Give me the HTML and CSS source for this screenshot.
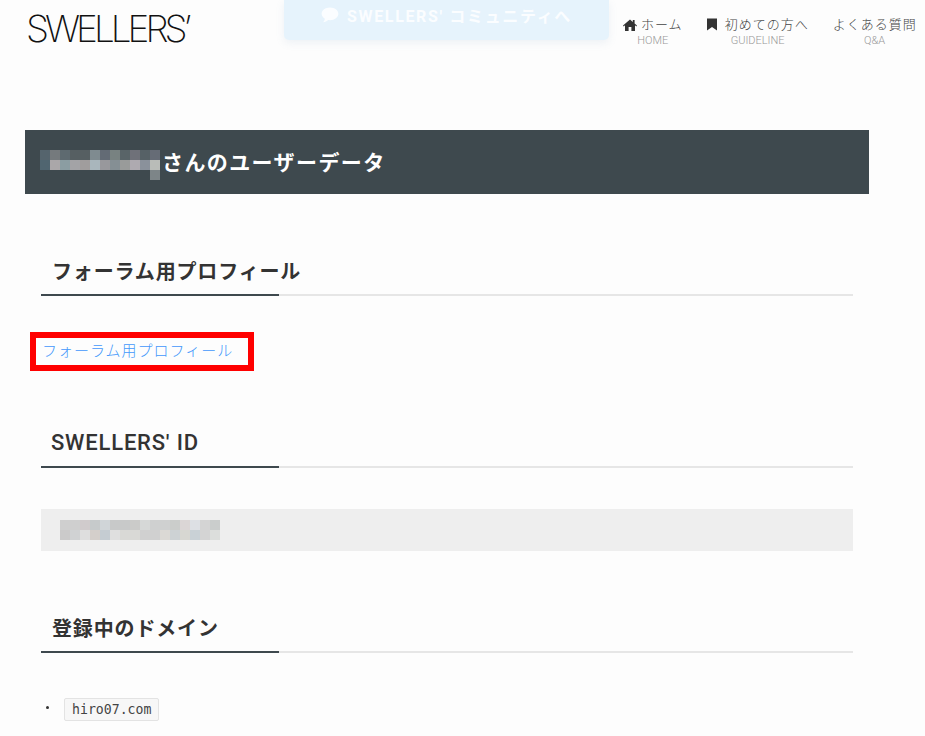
FILE: index.html
```html
<!DOCTYPE html>
<html lang="ja">
<head>
  <meta charset="UTF-8" />
  <title>SWELLERS' ユーザーデータ</title>
  <meta name="viewport" content="width=device-width, initial-scale=1.0" />
  <link rel="stylesheet" href="styles.css">
</head>
<body>
  <header class="site-header">
    <a class="logo" href="#">SWELLERS’</a>
    <a class="community" href="#">
      <svg class="community-icon" viewBox="0 0 20 18" aria-hidden="true"><path d="M10 0.5C4.8 0.5 0.6 3.6 0.6 7.6c0 2.3 1.4 4.3 3.6 5.6-.2 1.5-1 2.9-2 3.9 2.3-.2 4.4-1.2 5.8-2.5.6.1 1.3.2 2 .2 5.2 0 9.4-3.2 9.4-7.2S15.2.5 10 .5z"/></svg>
      SWELLERS' コミュニティへ
    </a>
    <nav class="nav">
      <a class="nav-item" href="#">
        <span class="nav-label"><svg class="nav-icon" viewBox="0 0 14 12" aria-hidden="true"><path d="M7 0.5 0 6.6l.7.8L2 6.3V12h3.6V8h2.8v4H12V6.3l1.3 1.1.7-.8-2.4-2.1V1h-1.8v2L7 .5z"/></svg>ホーム</span>
        <span class="nav-sub">HOME</span>
      </a>
      <a class="nav-item" href="#">
        <span class="nav-label"><svg class="nav-icon nav-icon-mark" viewBox="0 0 10 12" aria-hidden="true"><path d="M0 0h10v12L5 8.6 0 12z"/></svg>初めての方へ</span>
        <span class="nav-sub">GUIDELINE</span>
      </a>
      <a class="nav-item" href="#">
        <span class="nav-label">よくある質問</span>
        <span class="nav-sub">Q&amp;A</span>
      </a>
    </nav>
  </header>

  <main class="content">
    <h1 class="page-title"><span class="blur-name"></span>さんのユーザーデータ</h1>

    <section class="section">
      <h2 class="section-title">フォーラム用プロフィール</h2>
      <p class="profile-link"><a href="#">フォーラム用プロフィール</a><span class="highlight"></span></p>
    </section>

    <section class="section section-id">
      <h2 class="section-title title-latin">SWELLERS' ID</h2>
      <div class="id-box"><span class="blur-id"></span></div>
    </section>

    <section class="section section-domain">
      <h2 class="section-title">登録中のドメイン</h2>
      <ul class="domains">
        <li><code>hiro07.com</code></li>
      </ul>
    </section>
  </main>
</body>
</html>
```

FILE: styles.css
```css
* {
  box-sizing: border-box;
}

html, body {
  height: 736px;
  overflow: hidden;
}

body {
  margin: 0;
  background: #fdfdfd;
  color: #333;
  font-family: Roboto, "Noto Sans CJK JP", sans-serif;
}

a {
  text-decoration: none;
}

.site-header {
  display: flex;
  align-items: flex-start;
  height: 130px;
  padding-left: 26px;
}

.logo {
  width: 258px;
  margin-top: 6px;
  color: #111;
  font-family: Inter, sans-serif;
  font-size: 37px;
  font-weight: 200;
  line-height: 46px;
  letter-spacing: -4px;
  white-space: nowrap;
}

.community {
  display: flex;
  align-items: center;
  justify-content: center;
  gap: 8px;
  width: 325px;
  height: 40px;
  padding-bottom: 11px;
  background: #e6f3fc;
  border-radius: 0 0 5px 5px;
  box-shadow: 0 3px 8px rgba(120, 160, 190, 0.12);
  color: #fbfdff;
  font-size: 16px;
  font-weight: 700;
  letter-spacing: 1.65px;
}

.community-icon {
  width: 18px;
  height: 16px;
  fill: #fbfdff;
}

.nav {
  display: flex;
  gap: 24px;
  margin-left: 14px;
  padding-top: 16px;
}

.nav-item {
  display: flex;
  flex-direction: column;
  align-items: center;
  color: #444;
}

.nav-label {
  display: flex;
  align-items: center;
  font-size: 13px;
  font-weight: 300;
  line-height: 17px;
  letter-spacing: 1px;
  white-space: nowrap;
}

.nav-icon {
  width: 14px;
  height: 12px;
  margin-right: 4px;
  fill: #333;
}

.nav-icon-mark {
  width: 10px;
  height: 13px;
  margin-right: 8px;
}

.nav-sub {
  margin-top: 1px;
  color: #999;
  font-size: 11px;
  font-weight: 300;
  line-height: 14px;
}

.content {
  width: 844px;
  margin-left: 25px;
}

.page-title {
  display: flex;
  align-items: center;
  height: 64px;
  margin: 0;
  padding: 0 0 2px 15px;
  background: #3e494e;
  color: #fff;
  font-size: 21px;
  font-weight: 700;
  letter-spacing: 1.4px;
}

.blur-name {
  position: relative;
  width: 120px;
  height: 20px;
  margin-right: 2px;
  margin-top: -2px;
  background:
    linear-gradient(90deg, #55646d 0 10px, #757a7d 10px 20px, #5e6a70 20px 30px, #565f62 30px 50px, #7f8b90 50px 60px, #636b75 60px 70px, #788281 70px 80px, #596468 80px 90px, #6f7179 90px 100px, #566166 100px 110px, #666c76 110px 120px) 0 0 / 120px 10px no-repeat,
    linear-gradient(90deg, #506570 0 10px, #aaa7a9 10px 20px, #8b9da2 20px 30px, #a3a3a6 30px 40px, #a09d9d 40px 50px, #a9b6bc 50px 60px, #98989c 60px 70px, #858f94 70px 80px, #999b9a 80px 90px, #aeaab0 90px 100px, #8a919b 100px 110px, #b9bcb8 110px 120px) 0 10px / 120px 10px no-repeat;
}

.blur-name::after {
  content: "";
  position: absolute;
  top: 20px;
  left: 110px;
  width: 10px;
  height: 10px;
  background: #7d8588;
}

.section {
  padding: 0 16px;
}

.section-title {
  height: 52px;
  margin: 50px 0 0;
  padding: 12px 0 0 11px;
  border-bottom: 2px solid #e6e6e6;
  position: relative;
  color: #333;
  font-size: 20px;
  font-weight: 700;
  line-height: 32px;
  letter-spacing: 0.85px;
}

.section-title::after {
  content: "";
  position: absolute;
  left: 0;
  bottom: -2px;
  width: 238px;
  height: 2px;
  background: #3e494e;
}

.title-latin {
  padding-top: 11px;
  padding-left: 10px;
  font-size: 22px;
  font-weight: 500;
  letter-spacing: 0.8px;
}

.profile-link {
  position: relative;
  margin: 45px 0 0;
  padding-left: 1px;
  font-size: 15px;
  font-weight: 300;
  line-height: 20px;
  letter-spacing: 1px;
}

.profile-link a {
  color: #4398fb;
}

.highlight {
  position: absolute;
  top: -9px;
  left: -11px;
  width: 224px;
  height: 39px;
  border: 6px solid #ff0000;
}

.section-id {
  padding-top: 5px;
}

.id-box {
  display: flex;
  align-items: center;
  height: 42px;
  margin-top: 41px;
  padding-left: 19px;
  background: #eee;
}

.blur-id {
  width: 160px;
  height: 20px;
  background:
    linear-gradient(90deg, #cfcfcf 0 20px, #d0cbcc 20px 30px, #c6cacb 30px 40px, #d0d5d8 40px 50px, #c8c9c9 50px 70px, #cbcbc9 70px 80px, #d6d8d7 80px 90px, #cfd0d0 90px 110px, #cbcdcb 110px 120px, #dbd6d6 120px 130px, #dde0e4 130px 140px, #d4d4d4 140px 150px, #cacdcc 150px 160px) 0 0 / 160px 10px no-repeat,
    linear-gradient(90deg, #cbcaca 0 10px, #d0d2d3 10px 20px, #dedede 20px 30px, #d4cfcb 30px 40px, #c5ccd2 40px 50px, #dfdfdf 50px 60px, #d9d9d6 60px 80px, #d0d0d0 80px 100px, #dbd9d5 100px 110px, #cdd2d4 110px 120px, #d7d7d2 120px 130px, #c9d1d6 130px 140px, #d4d4d4 140px 150px, #dcdedc 150px 160px) 0 10px / 160px 10px no-repeat;
}

.section-domain .section-title {
  margin-top: 50px;
}

.domains {
  margin: 44px 0 0;
  padding: 0;
  list-style: none;
}

.domains li {
  display: flex;
  align-items: center;
  height: 24px;
  padding-left: 23px;
  position: relative;
}

.domains li::before {
  content: "";
  position: absolute;
  top: 9px;
  left: 5px;
  width: 3px;
  height: 3px;
  border-radius: 50%;
  background: #333;
}

code {
  padding: 0 7px;
  height: 23px;
  background: #f7f7f7;
  border: 1px solid #e3e3e3;
  border-radius: 2px;
  color: #444;
  font-family: "DejaVu Sans Mono", monospace;
  font-size: 13.2px;
  line-height: 21px;
}
```
